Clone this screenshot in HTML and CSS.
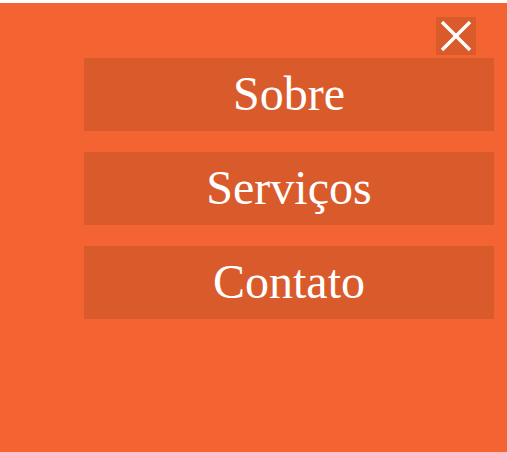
FILE: index.html
```html
<!DOCTYPE html>
<html lang="pt">
<head>
<meta charset="utf-8">
<title>Menu</title>
<link rel="stylesheet" href="styles.css">
</head>
<body>
<div class="menu">
  <div class="close-row">
    <button class="close" aria-label="Fechar">
      <svg width="40" height="38" viewBox="0 0 40 38"><path d="M6 5 L34 33 M34 5 L6 33" stroke="#fff" stroke-width="3.4" stroke-linecap="butt" fill="none"/></svg>
    </button>
  </div>
  <ul class="items">
    <li class="item">Sobre</li>
    <li class="item">Serviços</li>
    <li class="item">Contato</li>
  </ul>
</div>
</body>
</html>
```
FILE: styles.css
```css
html, body {
  margin: 0;
  padding: 0;
  height: 100%;
  background: #ffffff;
}
body {
  padding-top: 3px;
  box-sizing: border-box;
}
.menu {
  background: #f46432;
  height: 100%;
  box-sizing: border-box;
  padding: 14px 13px 0 84px;
}
.close-row {
  display: flex;
  justify-content: flex-end;
  padding-right: 18px;
}
.close {
  width: 40px;
  height: 38px;
  padding: 0;
  border: 0;
  background: #d95b2c;
  display: flex;
}
.items {
  list-style: none;
  margin: 3px 0 0;
  padding: 0;
  display: flex;
  flex-direction: column;
  gap: 21px;
}
.item {
  height: 73px;
  background: #d95b2c;
  color: #ffffff;
  font-family: "Liberation Serif", "Times New Roman", serif;
  font-size: 48px;
  display: flex;
  align-items: center;
  justify-content: center;
  padding-bottom: 2px;
  box-sizing: border-box;
}
```
